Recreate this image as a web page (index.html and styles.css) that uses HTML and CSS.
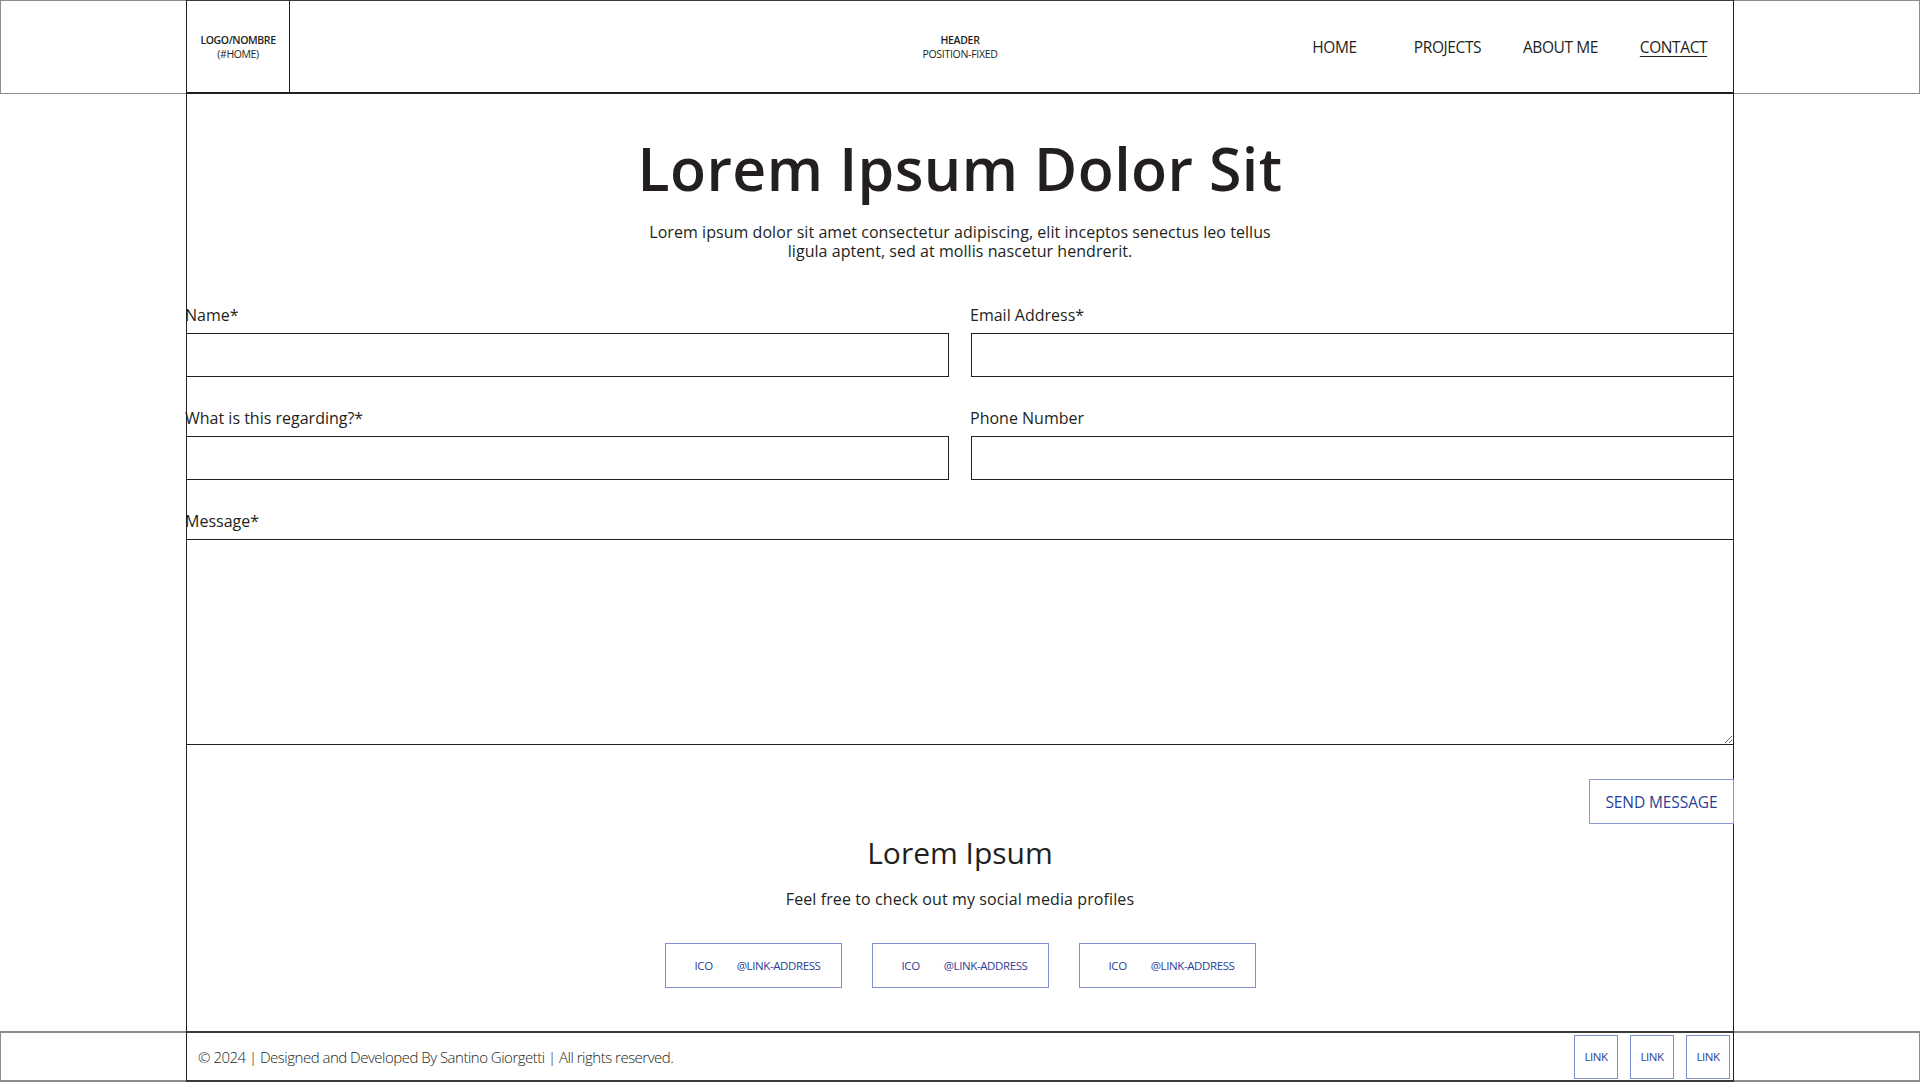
FILE: index.html
```html
<!DOCTYPE html>
<html lang="en">
<head>
<meta charset="utf-8">
<title>Contact</title>
<link rel="stylesheet" href="styles.css">
</head>
<body>
<header class="site-header">
  <div class="wrap header-inner">
    <a class="logo" href="#home"><strong>LOGO/NOMBRE</strong><span>(#HOME)</span></a>
    <div class="header-note"><strong>HEADER</strong><span>POSITION-FIXED</span></div>
    <nav class="nav">
      <a href="#home">HOME</a>
      <a href="#projects">PROJECTS</a>
      <a href="#about">ABOUT ME</a>
      <a href="#contact" class="active">CONTACT</a>
    </nav>
  </div>
</header>

<main class="wrap main">
  <h1 class="title">Lorem Ipsum Dolor Sit</h1>
  <p class="lead">Lorem ipsum dolor sit amet consectetur adipiscing, elit inceptos senectus leo tellus ligula aptent, sed at mollis nascetur hendrerit.</p>

  <form class="form">
    <div class="field">
      <label for="name">Name*</label>
      <input id="name" type="text">
    </div>
    <div class="field">
      <label for="email">Email Address*</label>
      <input id="email" type="email">
    </div>
    <div class="field">
      <label for="regarding">What is this regarding?*</label>
      <input id="regarding" type="text">
    </div>
    <div class="field">
      <label for="phone">Phone Number</label>
      <input id="phone" type="tel">
    </div>
    <div class="field full">
      <label for="message">Message*</label>
      <textarea id="message"></textarea>
    </div>
    <div class="actions full">
      <button type="button" class="send">SEND MESSAGE</button>
    </div>
  </form>

  <section class="social">
    <h2>Lorem Ipsum</h2>
    <p>Feel free to check out my social media profiles</p>
    <div class="social-links">
      <a href="#" class="social-link"><span>ICO</span><span>@LINK-ADDRESS</span></a>
      <a href="#" class="social-link"><span>ICO</span><span>@LINK-ADDRESS</span></a>
      <a href="#" class="social-link"><span>ICO</span><span>@LINK-ADDRESS</span></a>
    </div>
  </section>
</main>

<footer class="site-footer">
  <div class="wrap footer-inner">
    <p class="copy">© 2024 | Designed and Developed By Santino Giorgetti | All rights reserved.</p>
    <div class="footer-links">
      <a href="#">LINK</a>
      <a href="#">LINK</a>
      <a href="#">LINK</a>
    </div>
  </div>
</footer>
</body>
</html>
```

FILE: styles.css
```css
* { box-sizing: border-box; }

html, body {
  margin: 0;
  padding: 0;
  background: #fff;
}

body {
  font-family: "Open Sans", "Noto Sans", sans-serif;
  color: #231f20;
  height: 1082px;
  overflow: hidden;
}

a { color: inherit; text-decoration: none; }

.wrap {
  width: 1548px;
  margin: 0 auto;
  border-left: 1px solid #231f20;
  border-right: 1px solid #231f20;
}

/* Header */
.site-header {
  border: 1px solid #8c8c8c;
  height: 94px;
}

.header-inner {
  margin-top: -1px;
  height: 94px;
  border-top: 1px solid #3a3a3a;
  border-bottom: 2px solid #231f20;
  display: grid;
  grid-template-columns: 1fr auto 1fr;
  align-items: stretch;
}

.logo {
  width: 103px;
  border-right: 1px solid #231f20;
  display: flex;
  flex-direction: column;
  align-items: center;
  justify-content: center;
  font-size: 10.5px;
  line-height: 14px;
  letter-spacing: -0.4px;
}
.logo strong { font-weight: 600; }
.logo span { font-weight: 400; }

.header-note {
  display: flex;
  flex-direction: column;
  align-items: center;
  justify-content: center;
  font-size: 10.5px;
  line-height: 14px;
  letter-spacing: -0.3px;
}
.header-note strong { font-weight: 600; }

.nav {
  justify-self: end;
  display: flex;
  align-items: center;
  padding-right: 3px;
}
.nav a {
  width: 113px;
  text-align: center;
  font-size: 15.5px;
  font-weight: 500;
  letter-spacing: -0.4px;
}
.nav a.active {
  text-decoration: underline;
  text-underline-offset: 3px;
  text-decoration-thickness: 1px;
}

/* Main */
.main {
  height: 937px;
  display: flex;
  flex-direction: column;
}

.title {
  margin: 36px 0 0;
  text-align: center;
  font-size: 59px;
  font-weight: 600;
  line-height: 76px;
  letter-spacing: 0.4px;
}

.lead {
  margin: 17px auto 0;
  width: 640px;
  text-align: center;
  font-size: 16px;
  font-weight: 500;
  line-height: 19px;
  letter-spacing: 0.05px;
}

.form {
  margin: 45px -1px 0;
  display: grid;
  grid-template-columns: 1fr 1fr;
  column-gap: 22px;
  row-gap: 32px;
}

.field {
  display: flex;
  flex-direction: column;
}
.full { grid-column: 1 / -1; }

.field label {
  font-size: 16px;
  font-weight: 500;
  line-height: 18px;
  letter-spacing: 0;
  margin-left: -1px;
  margin-bottom: 9px;
}

.field input,
.field textarea {
  height: 44px;
  border: 1px solid #231f20;
  border-radius: 0;
  background: #fff;
  font: inherit;
  padding: 0 12px;
  margin: 0;
  outline: none;
}

.field textarea {
  height: 206px;
  padding: 10px 12px;
  resize: vertical;
}

.actions {
  display: flex;
  justify-content: flex-end;
  margin-top: 2px;
}

.send {
  width: 145px;
  height: 45px;
  background: #fff;
  border: 1px solid #8a9ad0;
  color: #2b3e97;
  font-family: inherit;
  font-size: 15.5px;
  font-weight: 500;
  letter-spacing: -0.1px;
  padding: 0;
  cursor: pointer;
}

.social {
  text-align: center;
  margin-top: 6px;
}
.social h2 {
  margin: 0;
  font-size: 30px;
  font-weight: 400;
  line-height: 46px;
  letter-spacing: 0;
}
.social p {
  margin: 13px 0 0;
  font-size: 16px;
  font-weight: 500;
  line-height: 20px;
  letter-spacing: 0.1px;
}

.social-links {
  display: flex;
  justify-content: center;
  gap: 30px;
  margin-top: 34px;
}
.social-link {
  width: 177px;
  height: 45px;
  border: 1px solid #7f90cc;
  color: #2b3e97;
  display: flex;
  align-items: center;
  gap: 24px;
  padding-left: 29px;
  font-size: 11.5px;
  font-weight: 500;
  letter-spacing: -0.4px;
}

/* Footer */
.site-footer {
  border: 1px solid #8c8c8c;
  border-top-width: 2px;
  border-bottom-width: 2px;
  height: 51px;
}
.footer-inner {
  margin-top: -2px;
  height: 51px;
  border-top: 2px solid #3a3a3a;
  border-bottom: 2px solid #3a3a3a;
  display: flex;
  align-items: center;
  justify-content: space-between;
  padding: 0 3px 0 11px;
}
.copy {
  margin: 0;
  font-size: 15px;
  font-weight: 300;
  letter-spacing: -0.5px;
  color: #231f20;
}
.footer-links {
  display: flex;
  gap: 12px;
}
.footer-links a {
  width: 44px;
  height: 44px;
  border: 1px solid #7f90cc;
  color: #2b3e97;
  display: flex;
  align-items: center;
  justify-content: center;
  font-size: 11.5px;
  font-weight: 500;
  letter-spacing: -0.5px;
}
```
